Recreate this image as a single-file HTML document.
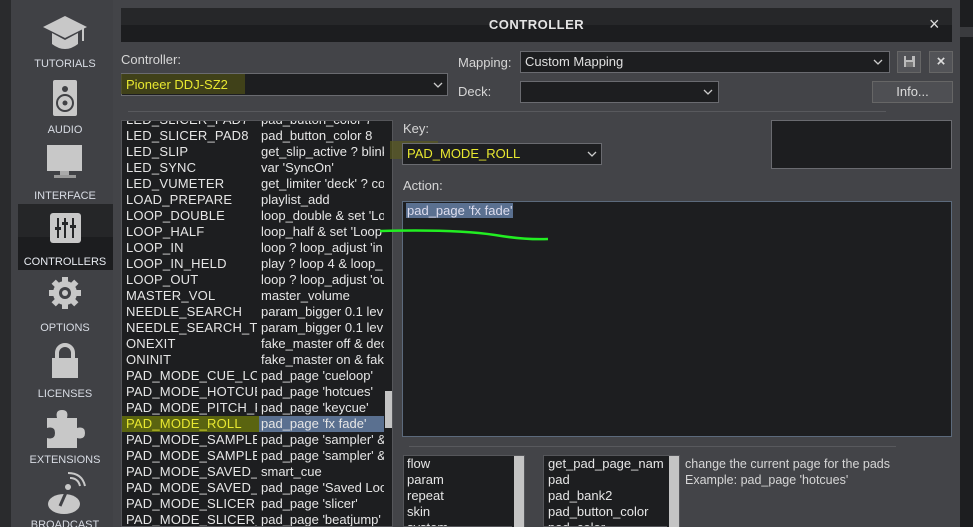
<!DOCTYPE html>
<html><head><meta charset="utf-8"><style>
*{margin:0;padding:0;box-sizing:border-box}
html,body{width:973px;height:527px;overflow:hidden}
body{background:#1f2022;font-family:"Liberation Sans",Arial,sans-serif;position:relative}
.a{position:absolute}
.dlg{left:11px;top:0;width:949px;height:527px;background:#434448;border-left:1px solid #55565a}
.side{left:11px;top:0;width:102px;height:527px;background:#404145}
.lbl{color:#d8dce4;font-size:11px;width:102px;text-align:center;left:14px}
.ic{fill:#c8c8c8}
.txt{color:#d6d6d6;font-size:13px}
.dd{background:#1d1e20;border:1px solid #6a6b70}
.list{background:#1d1e20;color:#e6e6e6;font-size:13px;line-height:16px;overflow:hidden}
.row{height:16px;white-space:nowrap;position:relative}
.c1{position:absolute;left:4px;width:131px;overflow:hidden;letter-spacing:.2px}
.c2{position:absolute;left:139px;width:124px;overflow:hidden}
</style></head><body>
<div class="a" style="left:0;top:0;width:11px;height:527px;background:#2a2b2d"></div>
<div class="a" style="left:960px;top:0;width:13px;height:527px;background:#1d1e20"></div>
<div class="a" style="left:960px;top:27px;width:13px;height:10px;background:#3a3b3e"></div>
<div class="a dlg"></div>
<div class="a side"></div>
<svg width="0" height="0" style="position:absolute"><defs><symbol id="chev" viewBox="0 0 10 6"><path d="M1 1 L5 5 L9 1" fill="none" stroke="#ccc" stroke-width="1.3"/></symbol></defs></svg>
<!-- sidebar -->
<svg class="a" style="left:40px;top:14px" width="50" height="40" viewBox="0 0 50 40"><path class="ic" d="M25 2 L47 13 L25 24 L3 13Z"/><path class="ic" d="M12 19 L12 30 Q25 40 38 30 L38 19 L25 26Z"/><rect class="ic" x="42" y="13" width="2" height="14"/></svg>
<div class="a lbl" style="top:58px">TUTORIALS</div>
<svg class="a" style="left:53px;top:80px" width="24" height="36"><rect x="0" y="0" width="24" height="36" rx="2" fill="#c8c8c8"/><circle cx="12" cy="9" r="3" fill="#404145"/><circle cx="12" cy="23" r="8" fill="none" stroke="#404145" stroke-width="2"/><circle cx="12" cy="23" r="2.5" fill="#404145"/></svg>
<div class="a lbl" style="top:124px">AUDIO</div>
<svg class="a" style="left:47px;top:145px" width="36" height="38"><rect x="0" y="0" width="35" height="26" fill="#c8c8c8"/><rect x="13" y="26" width="9" height="4" fill="#aaa"/><rect x="7" y="30" width="22" height="3" fill="#999"/></svg>
<div class="a lbl" style="top:190px">INTERFACE</div>
<div class="a" style="left:18px;top:204px;width:95px;height:66px;background:#1c1d1f"></div>
<div class="a" style="left:18px;top:204px;width:95px;height:33px;background:#252628"></div>
<svg class="a" style="left:50px;top:213px" width="31" height="30"><rect width="31" height="30" rx="3" fill="#c8c8c8"/><g stroke="#252628" stroke-width="2"><line x1="8" y1="5" x2="8" y2="25"/><line x1="15" y1="5" x2="15" y2="25"/><line x1="23" y1="5" x2="23" y2="25"/></g><g fill="#252628"><rect x="5" y="14" width="6" height="3"/><rect x="12" y="9" width="6" height="3"/><rect x="20" y="12" width="6" height="3"/></g></svg>
<div class="a lbl" style="top:256px;color:#e8ecf2">CONTROLLERS</div>
<svg class="a" style="left:48px;top:276px" width="34" height="34" viewBox="0 0 34 34"><g fill="#c8c8c8"><circle cx="17" cy="17" r="12"/><rect x="14" y="1" width="6" height="32"/><rect x="1" y="14" width="32" height="6"/><rect x="14" y="1" width="6" height="32" transform="rotate(45 17 17)"/><rect x="14" y="1" width="6" height="32" transform="rotate(-45 17 17)"/></g><circle cx="17" cy="17" r="6" fill="#404145"/><circle cx="17" cy="17" r="3" fill="#c8c8c8"/></svg>
<div class="a lbl" style="top:322px">OPTIONS</div>
<svg class="a" style="left:50px;top:343px" width="30" height="36"><path d="M7 16 V10 A8 8 0 0 1 23 10 V16" fill="none" stroke="#c8c8c8" stroke-width="4"/><rect x="2" y="15" width="26" height="20" fill="#c8c8c8"/></svg>
<div class="a lbl" style="top:388px">LICENSES</div>
<svg class="a" style="left:45px;top:408px" width="40" height="42"><path fill="#c8c8c8" d="M2 10 H12 Q10 2 17 2 Q24 2 22 10 H32 V20 Q40 18 40 25 Q40 32 32 30 V40 H2 V30 Q10 32 10 25 Q10 18 2 20Z"/></svg>
<div class="a lbl" style="top:454px">EXTENSIONS</div>
<svg class="a" style="left:46px;top:472px" width="40" height="44"><ellipse cx="18" cy="32" rx="16" ry="10" fill="#c8c8c8"/><line x1="14" y1="34" x2="22" y2="16" stroke="#404145" stroke-width="3"/><circle cx="22" cy="15" r="3" fill="#c8c8c8"/><path d="M24 6 Q32 6 34 14 M22 1 Q36 1 39 14" fill="none" stroke="#c8c8c8" stroke-width="2"/></svg>
<div class="a lbl" style="top:519px">BROADCAST</div>
<!-- title -->
<div class="a" style="left:121px;top:8px;width:831px;height:34px;background:#1c1d1f"></div>
<div class="a" style="left:121px;top:8px;width:831px;height:17px;background:#262729"></div>
<div class="a" style="left:121px;top:17px;width:831px;text-align:center;color:#e4e4e4;font-size:13px;font-weight:bold;letter-spacing:.5px">CONTROLLER</div>
<div class="a" style="left:929px;top:14px;color:#ddd;font-size:18px">×</div>
<div class="a txt" style="left:121px;top:52px">Controller:</div>
<div class="a dd" style="left:121px;top:73px;width:327px;height:23px"></div>
<div class="a" style="left:121px;top:74px;width:124px;height:20px;background:#4a4a18;opacity:.8"></div>
<div class="a" style="left:126px;top:77px;color:#e8e830;font-size:13px">Pioneer DDJ-SZ2</div>
<svg class="a" style="left:433px;top:82px" width="10" height="6"><use href="#chev"/></svg>
<div class="a txt" style="left:458px;top:55px">Mapping:</div>
<div class="a dd" style="left:520px;top:51px;width:370px;height:22px"></div>
<div class="a" style="left:525px;top:54px;color:#e0e0e0;font-size:13px">Custom Mapping</div>
<svg class="a" style="left:873px;top:59px" width="10" height="6"><use href="#chev"/></svg>
<div class="a" style="left:897px;top:51px;width:24px;height:22px;background:#525357;border:1px solid #666"></div>
<svg class="a" style="left:904px;top:56px" width="11" height="11"><rect width="11" height="11" fill="#bbb"/><rect x="2" y="0" width="6" height="4" fill="#525357"/><rect x="2" y="6" width="7" height="5" fill="#777"/></svg>
<div class="a" style="left:929px;top:51px;width:24px;height:22px;background:#525357;border:1px solid #666;color:#ddd;font-size:15px;font-weight:bold;text-align:center;line-height:20px">×</div>
<div class="a txt" style="left:458px;top:84px">Deck:</div>
<div class="a dd" style="left:520px;top:81px;width:199px;height:22px"></div>
<svg class="a" style="left:703px;top:89px" width="10" height="6"><use href="#chev"/></svg>
<div class="a" style="left:872px;top:81px;width:81px;height:22px;background:#4e4f53;border:1px solid #666;color:#ddd;font-size:13px;text-align:center;line-height:20px">Info...</div>
<div class="a" style="left:128px;top:111px;width:758px;height:1px;background:#58595d"></div>
<!-- list -->
<div class="a list" style="left:121px;top:120px;width:272px;height:407px;border:1px solid #55565a">
<div style="margin-top:-9px">
<div class="row"><span class="c1">LED_SLICER_PAD7</span><span class="c2">pad_button_color 7</span></div>
<div class="row"><span class="c1">LED_SLICER_PAD8</span><span class="c2">pad_button_color 8</span></div>
<div class="row"><span class="c1">LED_SLIP</span><span class="c2">get_slip_active ? blink</span></div>
<div class="row"><span class="c1">LED_SYNC</span><span class="c2">var 'SyncOn'</span></div>
<div class="row"><span class="c1">LED_VUMETER</span><span class="c2">get_limiter 'deck' ? col</span></div>
<div class="row"><span class="c1">LOAD_PREPARE</span><span class="c2">playlist_add</span></div>
<div class="row"><span class="c1">LOOP_DOUBLE</span><span class="c2">loop_double &amp; set 'Loo</span></div>
<div class="row"><span class="c1">LOOP_HALF</span><span class="c2">loop_half &amp; set 'Loop</span></div>
<div class="row"><span class="c1">LOOP_IN</span><span class="c2">loop ? loop_adjust 'in</span></div>
<div class="row"><span class="c1">LOOP_IN_HELD</span><span class="c2">play ? loop 4 &amp; loop_</span></div>
<div class="row"><span class="c1">LOOP_OUT</span><span class="c2">loop ? loop_adjust 'ou</span></div>
<div class="row"><span class="c1">MASTER_VOL</span><span class="c2">master_volume</span></div>
<div class="row"><span class="c1">NEEDLE_SEARCH</span><span class="c2">param_bigger 0.1 lev</span></div>
<div class="row"><span class="c1">NEEDLE_SEARCH_T</span><span class="c2">param_bigger 0.1 lev</span></div>
<div class="row"><span class="c1">ONEXIT</span><span class="c2">fake_master off &amp; dec</span></div>
<div class="row"><span class="c1">ONINIT</span><span class="c2">fake_master on &amp; fak</span></div>
<div class="row"><span class="c1">PAD_MODE_CUE_LO</span><span class="c2">pad_page 'cueloop'</span></div>
<div class="row"><span class="c1">PAD_MODE_HOTCUE</span><span class="c2">pad_page 'hotcues'</span></div>
<div class="row"><span class="c1">PAD_MODE_PITCH_P</span><span class="c2">pad_page 'keycue'</span></div>
<div class="row"><span class="c1" style="background:#5a6410;color:#e8e830;left:0;padding-left:4px;width:137px">PAD_MODE_ROLL</span><span class="c2" style="background:#5a7090;left:137px;padding-left:2px;width:126px">pad_page 'fx fade'</span></div>
<div class="row"><span class="c1">PAD_MODE_SAMPLE</span><span class="c2">pad_page 'sampler' &amp;</span></div>
<div class="row"><span class="c1">PAD_MODE_SAMPLE</span><span class="c2">pad_page 'sampler' &amp;</span></div>
<div class="row"><span class="c1">PAD_MODE_SAVED_</span><span class="c2">smart_cue</span></div>
<div class="row"><span class="c1">PAD_MODE_SAVED_</span><span class="c2">pad_page 'Saved Loo</span></div>
<div class="row"><span class="c1">PAD_MODE_SLICER</span><span class="c2">pad_page 'slicer'</span></div>
<div class="row"><span class="c1">PAD_MODE_SLICER_</span><span class="c2">pad_page 'beatjump'</span></div>
</div>
<div class="a" style="left:262px;top:0;width:9px;height:407px;background:#1d1e20"></div>
<div class="a" style="left:263px;top:270px;width:8px;height:37px;background:#c4c4c4"></div>
</div>
<!-- key -->
<div class="a txt" style="left:403px;top:121px">Key:</div>
<div class="a" style="left:390px;top:141px;width:48px;height:18px;background:#5a5a20;opacity:.7"></div>
<div class="a dd" style="left:402px;top:143px;width:200px;height:22px"></div>
<div class="a" style="left:407px;top:146px;color:#e8e830;font-size:13px">PAD_MODE_ROLL</div>
<svg class="a" style="left:587px;top:151px" width="10" height="6"><use href="#chev"/></svg>
<div class="a dd" style="left:771px;top:120px;width:181px;height:49px"></div>
<div class="a txt" style="left:403px;top:178px">Action:</div>
<div class="a" style="left:402px;top:201px;width:550px;height:236px;background:#1d1e20;border:1px solid #5c6a7c"></div>
<div class="a" style="left:406px;top:203px;background:#5a7090;color:#dde;font-size:13px;padding:0 1px">pad_page 'fx fade'</div>
<svg class="a" style="left:375px;top:225px" width="180" height="20"><path d="M5 6 Q80 4 120 10 Q150 15 173 14" fill="none" stroke="#22ee22" stroke-width="2.5"/></svg>
<div class="a" style="left:409px;top:446px;width:487px;height:1px;background:#58595d"></div>
<div class="a list" style="left:403px;top:455px;width:122px;height:72px;border:1px solid #55565a;padding-left:3px;line-height:16px;font-size:13px">flow<br>param<br>repeat<br>skin<br>system</div>
<div class="a" style="left:512px;top:456px;width:12px;height:71px;background:#c4c4c4;border-left:2px solid #1d1e20"></div>
<div class="a list" style="left:543px;top:455px;width:137px;height:72px;border:1px solid #55565a;padding-left:4px;line-height:16px;font-size:13px;white-space:nowrap">get_pad_page_nam<br>pad<br>pad_bank2<br>pad_button_color<br>pad_color</div>
<div class="a" style="left:667px;top:456px;width:12px;height:71px;background:#c4c4c4;border-left:2px solid #1d1e20"></div>
<div class="a txt" style="left:685px;top:456px;line-height:16px;font-size:12.5px">change the current page for the pads<br>Example: pad_page 'hotcues'</div>
</body></html>
